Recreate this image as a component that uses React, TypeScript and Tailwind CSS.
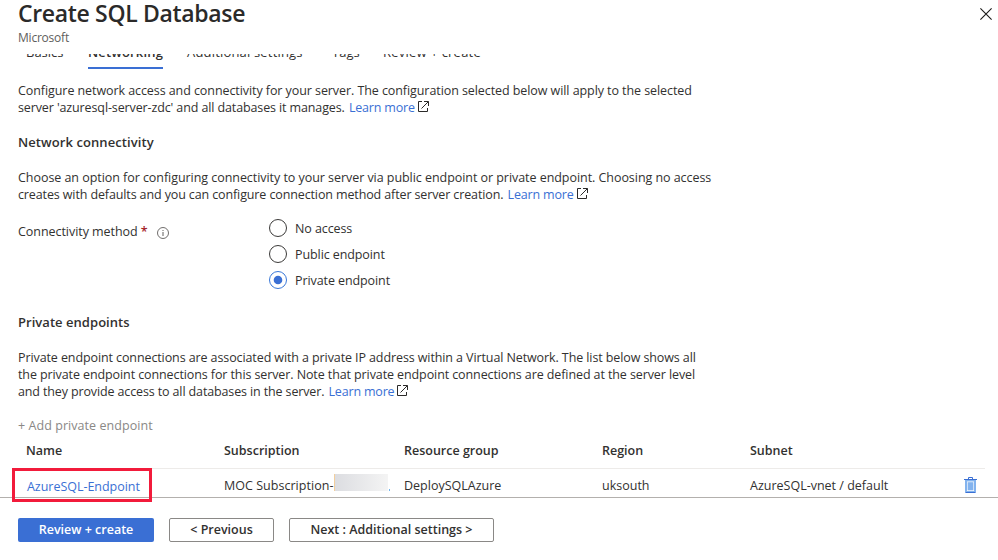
import type { ReactNode } from "react";

function Line({ className = "", children }: { className?: string; children: ReactNode }) {
  return <div className={`flex h-[17px] items-center whitespace-pre leading-[17px] ${className}`}>{children}</div>;
}

function ExternalIcon() {
  return (
    <svg className="-mt-[3px] ml-[3px] h-[11px] w-[11px] shrink-0" viewBox="0 0 11 11" fill="none" stroke="#2b2a29">
      <path d="M4 .5H.5v10h9V7M6 .5h4.5V5M10.3.7 3.5 7.5" />
    </svg>
  );
}

function LearnMore() {
  return (
    <>
      <a className="pl-px tracking-[-0.18px] text-[#3a6fd4]">Learn more</a>
      <ExternalIcon />
    </>
  );
}

function Radio({ label, checked = false }: { label: string; checked?: boolean }) {
  return (
    <label className="flex h-[26px] items-center gap-2">
      <svg className="h-[18px] w-[18px]" viewBox="0 0 18 18" fill="none">
        <circle cx="9" cy="9" r="8.5" stroke={checked ? "#3a78d8" : "#3b3a39"} />
        {checked && <circle cx="9" cy="9" r="4.3" fill="#3a6fd4" />}
      </svg>
      <span className="pt-[2px] tracking-[-0.09px]">{label}</span>
    </label>
  );
}

function TrashIcon() {
  return (
    <svg className="-mt-px h-4 w-[13px]" viewBox="0 0 13 16" fill="none">
      <path d="M1 3h11v12.5H1z" fill="#83b3ee" />
      <path d="M3 4.5h7v9.5H3z" fill="#fff" />
      <path d="M3.6 5.2h5.8V13.3H3.6z" fill="#83b3ee" />
      <path d="M0 2.5h13M4.5 2V.5h4V2M1.5 15.5h10" stroke="#3a6fd4" />
    </svg>
  );
}

const columns = "grid grid-cols-[198px_180px_198px_148px_1fr_21px]";

export default function App() {
  return (
    <div className="flex h-[560px] w-[998px] flex-col overflow-hidden bg-white font-['Open_Sans',sans-serif] text-[12.5px] text-[#323130]">
      <header className="flex h-[54px] shrink-0 justify-between pl-[18px] pr-[6px]">
        <div>
          <h1 className="-mt-[2px] whitespace-pre text-[23px] font-[560] leading-[31px] tracking-[-0.33px] text-[#2b2a29]">Create SQL Database</h1>
          <div className="text-[12px] leading-[18px] tracking-[-0.22px] text-[#605e5c]">Microsoft</div>
        </div>
        <svg className="mt-2 h-3 w-3" viewBox="0 0 12 12" stroke="#1b1a19" strokeWidth="1.1">
          <path d="m.4.4 11.2 11.2M11.6.4.4 11.6" />
        </svg>
      </header>

      <main className="flex h-[443px] shrink-0 flex-col">
        <div className="h-[15px] shrink-0 overflow-hidden">
          <nav className="-mt-[12px] flex h-[27px] whitespace-pre pl-[26px] pt-px text-[13px] leading-[19px]">
            <span className="w-[62px]">Basics</span>
            <span className="h-[26px] w-[75px] border-b-2 border-[#3a6fd4] font-semibold tracking-[0.15px]">Networking</span>
            <span className="ml-6 w-[145px] tracking-[0.18px]">Additional settings</span>
            <span className="w-[51px]">Tags</span>
            <span className="tracking-[0.22px]">Review + create</span>
          </nav>
        </div>

        <div className="mt-[13px] flex flex-col pl-[18px]">
          <Line className="tracking-[-0.075px]">Configure network access and connectivity for your server. The configuration selected below will apply to the selected</Line>
          <Line className="tracking-[-0.118px]">server 'azuresql-server-zdc' and all databases it manages. <LearnMore /></Line>
          <h2 className="mt-[18px] h-[17px] text-[13px] font-semibold leading-[17px] tracking-[0.08px]">Network connectivity</h2>
          <Line className="mt-[18px] tracking-[-0.05px]">Choose an option for configuring connectivity to your server via public endpoint or private endpoint. Choosing no access</Line>
          <Line className="tracking-[-0.12px]">creates with defaults and you can configure connection method after server creation. <LearnMore /></Line>

          <div className="mt-[12px] flex">
            <div className="mt-[9px] flex h-[17px] w-[251px] items-center">
              <span className="tracking-[-0.05px]">Connectivity method</span>
              <span className="ml-[3px] font-semibold text-[#a4262c]">*</span>
              <svg className="ml-[9px] h-3 w-3" viewBox="0 0 12 12" fill="none" stroke="#605e5c">
                <circle cx="6" cy="6" r="5.5" strokeWidth=".9" />
                <path d="M6 5v4M6 3v1" />
              </svg>
            </div>
            <div>
              <Radio label="No access" />
              <Radio label="Public endpoint" />
              <Radio label="Private endpoint" checked />
            </div>
          </div>

          <h2 className="mt-[21px] h-[17px] text-[13px] font-semibold leading-[17px] tracking-[0.04px]">Private endpoints</h2>
          <Line className="mt-[18px] tracking-[-0.1px]">Private endpoint connections are associated with a private IP address within a Virtual Network. The list below shows all</Line>
          <Line className="tracking-[-0.1px]">the private endpoint connections for this server. Note that private endpoint connections are defined at the server level</Line>
          <Line className="tracking-[-0.13px]">and they provide access to all databases in the server. <LearnMore /></Line>
          <Line className="mt-[17px] tracking-[0.06px] text-[#8a8886]">+ Add private endpoint</Line>
        </div>

        <div className="ml-[12px] mr-[13px] mt-[8px] flex flex-col">
          <div className={`${columns} h-[27px] border-b border-[#edebe9] pl-[14px] font-semibold leading-[18px]`}>
            <span>Name</span>
            <span>Subscription</span>
            <span>Resource group</span>
            <span>Region</span>
            <span>Subnet</span>
          </div>
          <div className="relative">
            <div className={`${columns} h-[28px] items-center whitespace-pre pl-[14px] pt-[5px]`}>
              <span className="pl-px pt-[3px] tracking-[-0.03px] text-[#3a6fd4]">AzureSQL-Endpoint</span>
              <span className="flex items-center pt-px tracking-[0.03px]">
                MOC Subscription-
                <span className="-mt-[7px] ml-px h-[17px] w-[54px] border-l border-[#f3cf9d] bg-linear-to-r from-[#dcdde1] to-[#f4f4f4]" />
                <span className="ml-px mt-[7px] h-[2px] w-px bg-[#6fb4ee]" />
              </span>
              <span className="pt-px">DeploySQLAzure</span>
              <span className="pt-px">uksouth</span>
              <span className="pt-px">AzureSQL-vnet / default</span>
              <TrashIcon />
            </div>
            <div className="absolute -top-px left-0 h-[34px] w-[140px] border-3 border-[#f21b3b]" />
          </div>
        </div>
      </main>

      <footer className="flex h-[63px] shrink-0 gap-[15px] border-t border-[#b3b0ad] pl-[18px] pt-[20px] font-semibold">
        <button className="h-6 w-[136px] rounded-[2px] bg-[#3a6fd4] text-white">Review + create</button>
        <button className="h-6 w-[105px] rounded-[2px] border border-[#8a8886]">&lt; Previous</button>
        <button className="h-6 w-[205px] rounded-[2px] border border-[#8a8886]">Next : Additional settings &gt;</button>
      </footer>
    </div>
  );
}
